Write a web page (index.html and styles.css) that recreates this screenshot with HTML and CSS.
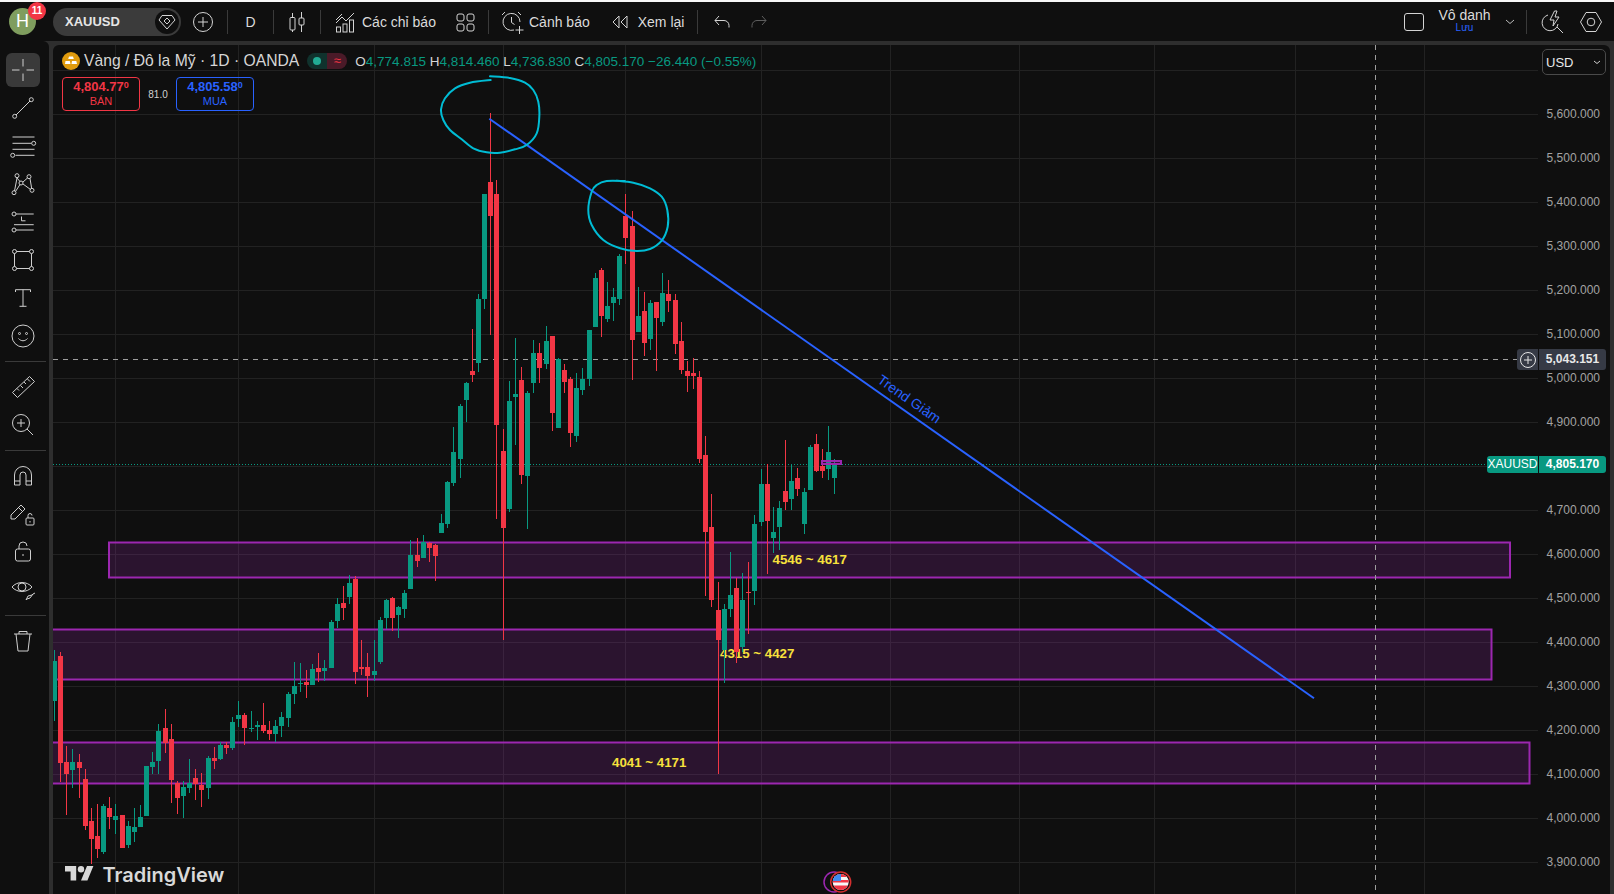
FILE: index.html
```html
<!DOCTYPE html>
<html lang="vi">
<head>
<meta charset="utf-8">
<title>XAUUSD</title>
<link rel="stylesheet" href="styles.css">
</head>
<body>
<header class="topbar">
  <div class="avatar">H<span class="badge">11</span></div>
  <div class="symbol">
    <span class="symbol-name">XAUUSD</span>
    <span class="gem"><svg width="20" height="20" viewBox="0 0 20 20"><path d="M5 3.5h10l3 4.5-8 9-8-9z"/><path d="M10 6l3 3-3 3-3-3z"/></svg></span>
  </div>
  <button class="tb plus-btn"><svg width="22" height="22" viewBox="0 0 22 22"><circle cx="11" cy="11" r="9.5"/><path d="M11 6v10M6 11h10"/></svg></button>
  <i class="sep sep-a"></i>
  <button class="tb d-btn">D</button>
  <i class="sep"></i>
  <button class="tb candle-btn"><svg width="24" height="24" viewBox="0 0 24 24"><path d="M7.5 3v5M7.5 20v2M16.5 2v6M16.5 15v7"/><rect x="5" y="7.5" width="5" height="12.500" rx="1"/><rect x="14" y="8" width="5" height="7" rx="1"/></svg></button>
  <i class="sep"></i>
  <button class="tb ind-btn"><svg width="24" height="24" viewBox="0 0 24 24"><path d="M3 13l6-6 4 4 8-8M3 10l6-6"/><rect x="3.500" y="17" width="4" height="5"/><rect x="10" y="14" width="4" height="8"/><rect x="16.500" y="10" width="4" height="12"/></svg><span>Các chỉ báo</span></button>
  <button class="tb grid-btn"><svg width="24" height="24" viewBox="0 0 24 24"><rect x="4" y="4" width="7" height="7" rx="2"/><rect x="14" y="4" width="7" height="7" rx="2"/><rect x="4" y="14" width="7" height="7" rx="2"/><rect x="14" y="14" width="7" height="7" rx="2"/></svg></button>
  <i class="sep sep-c"></i>
  <button class="tb alert-btn"><svg width="26" height="26" viewBox="0 0 26 26"><path d="M15 21a8.500 8.500 0 1 1 6-8M12.500 8v5.500l3 2M3 6l3-3M22 6l-3-3"/><path d="M20.500 17v8M16.500 21h8"/></svg><span>Cảnh báo</span></button>
  <button class="tb replay-btn"><svg width="24" height="24" viewBox="0 0 24 24"><path d="M11 6l-6 6 6 6zM19 6l-6 6 6 6z"/></svg><span>Xem lại</span></button>
  <i class="sep sep-d"></i>
  <button class="tb undo-btn"><svg width="22" height="22" viewBox="0 0 22 22"><path d="M8 5L4 9.500l4 4.500M4 9.500h9a5 5 0 0 1 5 5v2"/></svg></button>
  <button class="tb redo-btn"><svg width="22" height="22" viewBox="0 0 22 22"><path d="M14 5l4 4.500-4 4.500M18 9.500H9a5 5 0 0 0-5 5v2"/></svg></button>
  <div class="top-right">
    <i class="layout-box"></i>
    <div class="layout-name"><span class="layout-title">Vô danh</span><span class="layout-save">Lưu</span></div>
    <svg class="chev" width="10" height="6" viewBox="0 0 10 6"><path d="M1 1l4 3.500L9 1"/></svg>
    <i class="sep sep-b"></i>
    <button class="tb tool-btn"><svg width="28" height="28" viewBox="0 0 28 28"><path d="M10 7a8 8 0 1 0 10 9M19 19l6 6"/><path d="M16.500 3L12 12h4l-1 6 6-9h-4l2-6z"/></svg></button>
    <button class="tb tool-btn hex-btn"><svg width="24" height="24" viewBox="0 0 24 24"><path d="M7 2.500h10l5.500 9.500-5.500 9.500H7L1.500 12z"/><circle cx="12" cy="12" r="3.800"/></svg></button>
  </div>
</header>

<div class="main">
  <nav class="side">
    <div class="tool-group">
      <button class="tool active"><svg width="28" height="28" viewBox="0 0 28 28"><path d="M14 3v7.500M14 17.500V25M3 14h7.500M17.500 14H25"/></svg></button>
      <button class="tool"><svg width="28" height="28" viewBox="0 0 28 28"><circle cx="22.300" cy="5.700" r="2"/><circle cx="5.700" cy="22.300" r="2"/><path d="M7 21L21 7"/></svg></button>
      <button class="tool"><svg width="28" height="28" viewBox="0 0 28 28"><path d="M3.500 5h22M3.500 11.300h19M3.500 17.300h22M6.500 23.300h19"/><circle cx="24.700" cy="11.300" r="2"/><circle cx="3.700" cy="23.300" r="2"/></svg></button>
      <button class="tool"><svg width="28" height="28" viewBox="0 0 28 28"><circle cx="8" cy="5.700" r="2"/><circle cx="20" cy="6.700" r="2"/><circle cx="12" cy="13" r="2"/><circle cx="5" cy="22.700" r="2"/><circle cx="23" cy="20.300" r="2"/><path d="M7.500 7.500l3.500 4M18.500 8L14 12M5.500 21L8 8M21 8.500l1.700 10M6.500 21.500l4.500-7M14 14l7.500 5.500"/></svg></button>
      <button class="tool"><svg width="28" height="28" viewBox="0 0 28 28"><circle cx="5" cy="6" r="2"/><circle cx="5" cy="22" r="2"/><path d="M7 6h17.700M5 16.700h19.700M7 22h17.700M12.500 8.500v4.300h4"/></svg></button>
      <button class="tool"><svg width="28" height="28" viewBox="0 0 28 28"><circle cx="5.500" cy="5.500" r="2"/><circle cx="22.500" cy="5.500" r="2"/><circle cx="5.500" cy="22.500" r="2"/><circle cx="22.500" cy="22.500" r="2"/><path d="M7.500 5.500h13M7.500 22.500h13M5.500 7.500v13M22.500 7.500v13"/></svg></button>
      <button class="tool"><svg width="28" height="28" viewBox="0 0 28 28"><path d="M6.500 8V5.700h15V8M14 5.700v16.600M10.500 22.300h7"/></svg></button>
      <button class="tool"><svg width="28" height="28" viewBox="0 0 28 28"><circle cx="14" cy="14" r="11"/><circle cx="10.500" cy="11.500" r="1"/><circle cx="17.500" cy="11.500" r="1"/><path d="M9.500 16.500c2.500 3 6.500 3 9 0"/></svg></button>
    </div>
    <i class="side-sep"></i>
    <div class="tool-group">
      <button class="tool"><svg width="28" height="28" viewBox="0 0 28 28"><path d="M3.500 19.500L20.500 3.500l5 5L8.500 24.500zM8 15.500l2 2M11.500 12.500l2.500 2.500M15 9l2 2M18.500 6l2.500 2.500"/></svg></button>
      <button class="tool"><svg width="28" height="28" viewBox="0 0 28 28"><circle cx="12" cy="12" r="8.500"/><path d="M12 8v8M8 12h8M18 18l6 6"/></svg></button>
    </div>
    <i class="side-sep"></i>
    <div class="tool-group">
      <button class="tool"><svg width="28" height="28" viewBox="0 0 28 28"><path d="M5.500 23V13a8.500 8.500 0 0 1 17 0v10h-5.500V13a3 3 0 0 0-6 0v10zM5.500 19H11M17 19h5.500"/></svg></button>
      <button class="tool"><svg width="28" height="28" viewBox="0 0 28 28"><path d="M2 19v-4L12 5l4 4L6 19zM9.500 7.500l4 4"/><rect x="17" y="18" width="8" height="7" rx="1"/><path d="M19 18v-2.500a2 2 0 0 1 4 0M21 21v1.500"/></svg></button>
      <button class="tool"><svg width="28" height="28" viewBox="0 0 28 28"><rect x="6.500" y="11" width="15" height="12" rx="2"/><path d="M10 11V8a4 4 0 0 1 8 0M14 16v2"/></svg></button>
      <button class="tool"><svg width="28" height="28" viewBox="0 0 28 28"><path d="M3 11c5-6 15-6 20 0-5 6-15 6-20 0z"/><circle cx="13" cy="11" r="4"/><path d="M17 24l2-4 4-1 1-1-3 4-3 1zM24 18l2-1"/></svg></button>
    </div>
    <i class="side-sep"></i>
    <div class="tool-group">
      <button class="tool"><svg width="28" height="28" viewBox="0 0 28 28"><path d="M5 7h18M10 7V4.500h8V7M7 7l2 17h10l2-17"/></svg></button>
    </div>
  </nav>

  <section class="chart">
    <svg id="canvas" class="canvas" width="1557" height="849" viewBox="53 45 1557 849"></svg>

    <div class="legend">
      <svg class="gold" width="18" height="18" viewBox="0 0 18 18"><circle cx="9" cy="9" r="9"/><path d="M7 4.500h4l.8 2.500H6.200zM3.500 9h4.300l.7 3H3zM10 9h4.300l.7 3h-5.500z"/></svg>
      <span class="title">Vàng / Đô la Mỹ · 1D · OANDA</span>
      <span class="status"><span class="st-g"><i></i></span><span class="st-r">≈</span></span>
      <span class="ohlc"><b>O</b>4,774.815 <b>H</b>4,814.460 <b>L</b>4,736.830 <b>C</b>4,805.170 −26.440 (−0.55%)</span>
    </div>
    <div class="trade">
      <div class="tbox sell"><strong>4,804.77<sup>0</sup></strong><span>BÁN</span></div>
      <span class="spread">81.0</span>
      <div class="tbox buy"><strong>4,805.58<sup>0</sup></strong><span>MUA</span></div>
    </div>

    <div class="currency"><span>USD</span><svg width="8" height="5" viewBox="0 0 8 5"><path d="M1 1l3 2.500L7 1"/></svg></div>

    <div class="axis">
      <span>5,600.000</span><span>5,500.000</span><span>5,400.000</span><span>5,300.000</span><span>5,200.000</span><span>5,100.000</span><span>5,000.000</span><span>4,900.000</span><span>4,800.000</span><span>4,700.000</span><span>4,600.000</span><span>4,500.000</span><span>4,400.000</span><span>4,300.000</span><span>4,200.000</span><span>4,100.000</span><span>4,000.000</span><span>3,900.000</span>
    </div>

    <div class="tag cross-tag">
      <span class="tag-l"><svg width="18" height="18" viewBox="0 0 18 18"><circle cx="9" cy="9" r="7.500"/><path d="M9 5v8M5 9h8"/></svg></span>
      <span class="tag-r">5,043.151</span>
    </div>
    <div class="tag last-tag">
      <span class="tag-l">XAUUSD</span>
      <span class="tag-r">4,805.170</span>
    </div>
  </section>
</div>
<script src="app.js"></script>
</body>
</html>
```

FILE: styles.css
```css
* { box-sizing: border-box; }
html, body { margin: 0; height: 894px; overflow: hidden; }
body {
  background: #2e2e2e;
  color: #dbdbdb;
  font-family: "Liberation Sans", Arial, sans-serif;
  display: flex;
  flex-direction: column;
}
button { background: none; border: 0; padding: 0; color: inherit; font: inherit; }
svg { display: block; }

/* top toolbar */
.topbar {
  height: 41px;
  flex: none;
  border-top: 2px solid #f7f7f7;
  background: #0f0f0f;
  display: flex;
  align-items: center;
  padding-left: 9px;
  font-size: 14px;
}
.topbar svg:not(.chev) { fill: none; stroke: #d4d4d4; stroke-width: 1; }
.avatar {
  position: relative;
  width: 27px;
  height: 27px;
  border-radius: 50%;
  background: #7f9d5e;
  color: #fff;
  font-size: 18px;
  line-height: 27px;
  text-align: center;
  flex: none;
}
.badge {
  position: absolute;
  left: 19px;
  top: -6px;
  width: 18px;
  height: 18px;
  border-radius: 50%;
  background: #f23645;
  color: #fff;
  font-size: 10px;
  font-weight: 700;
  line-height: 18px;
  text-align: center;
}
.symbol {
  margin-left: 17px;
  width: 128px;
  height: 28px;
  border-radius: 14px;
  background: #3b3b3b;
  display: flex;
  align-items: center;
  justify-content: space-between;
  padding: 0 2px 0 12px;
  flex: none;
}
.symbol-name { font-size: 13px; font-weight: 700; color: #e6e6e6; }
.gem {
  width: 24px;
  height: 24px;
  border-radius: 50%;
  background: #0f0f0f;
  display: flex;
  align-items: center;
  justify-content: center;
}
.tb { display: flex; align-items: center; justify-content: center; flex: none; }
.plus-btn { margin-left: 11px; width: 22px; }
.sep { width: 1px; height: 24px; background: #3a3a3a; flex: none; }
.sep-a { margin-left: 13px; }
.d-btn { width: 45px; font-size: 14px; }
.candle-btn { width: 46px; }
.ind-btn { margin-left: 12px; width: 116px; justify-content: flex-start; gap: 5px; white-space: nowrap; }
.grid-btn { margin-left: 4px; }
.sep-c { margin-left: 11px; }
.alert-btn { margin-left: 10px; white-space: nowrap; gap: 4px; }
.replay-btn { margin-left: 18px; white-space: nowrap; gap: 6px; }
.sep-d { margin-left: 13px; }
.undo-btn { margin-left: 13px; }
.redo-btn { margin-left: 15px; opacity: .4; }
.top-right { margin-left: auto; display: flex; align-items: center; height: 100%; }
.layout-box { width: 20px; height: 18px; border: 1px solid #d4d4d4; border-radius: 3px; }
.layout-name { margin-left: 14px; width: 53px; display: flex; flex-direction: column; align-items: center; line-height: 1; }
.layout-title { font-size: 14px; margin-top: -2px; }
.layout-save { font-size: 10px; color: #2962ff; margin-top: 1px; }
.chev { margin-left: 14px; fill: none; stroke: #bdbdbd; stroke-width: 1; }
.sep-b { margin-left: 11px; }
.tool-btn { margin-left: 11px; width: 28px; }
.hex-btn { margin-left: 11px; margin-right: 9px; }

/* main */
.main { flex: 1; display: flex; gap: 4px; padding: 4px 4px 0 0; min-height: 0; }
.side {
  width: 49px;
  flex: none;
  background: #0f0f0f;
  border-radius: 0 6px 0 0;
  margin-top: -4px;
  padding-top: 10px;
}
.side svg { fill: none; stroke: #cfcfcf; stroke-width: 1; }
.tool-group { display: flex; flex-direction: column; }
.tool {
  display: flex;
  align-items: center;
  justify-content: center;
  width: 34px;
  height: 34px;
  margin: 2px auto 2px 6px;
  border-radius: 6px;
}
.tool.active { background: #3a3a3a; }
.side-sep { display: block; height: 1px; margin: 6px 3px 6px 5px; background: #3a3a3a; }

/* chart */
.chart {
  position: relative;
  flex: 1;
  background: #0f0f0f;
  border-radius: 6px 6px 0 0;
  overflow: hidden;
}
.canvas { position: absolute; left: 0; top: 0; }
.zone-text { font-size: 13.3px; font-weight: 700; fill: #f7e03c; }
.trend-text { font-size: 14px; fill: #2962ff; }
.logo-text { font-family: Inter, sans-serif; font-size: 20px; font-weight: 600; fill: #d9d9d9; }

.legend {
  position: absolute;
  left: 9px;
  top: 7px;
  height: 18px;
  display: flex;
  align-items: center;
  white-space: nowrap;
}
.gold { flex: none; }
.gold circle { fill: #e09b0d; }
.gold path { fill: #fff; }
.title { margin-left: 4px; font-size: 15.7px; color: #d6d6d6; }
.status { margin-left: 8px; width: 40px; height: 16px; border-radius: 8px; overflow: hidden; display: flex; flex: none; }
.st-g { flex: 1; background: #10322d; display: flex; align-items: center; justify-content: center; }
.st-g i { width: 8px; height: 8px; border-radius: 50%; background: #22ab94; }
.st-r { flex: 1; background: #4a1a28; color: #f23645; font-size: 13px; line-height: 15px; text-align: center; }
.ohlc { margin-left: 8px; font-size: 13.5px; color: #089981; }
.ohlc b { font-weight: 400; color: #d6d6d6; }

.trade { position: absolute; left: 9px; top: 32px; display: flex; align-items: center; }
.tbox {
  width: 78px;
  height: 34px;
  border: 1px solid;
  border-radius: 4px;
  display: flex;
  flex-direction: column;
  align-items: center;
  justify-content: center;
  font-size: 11px;
  line-height: 14px;
}
.tbox strong { font-size: 13px; font-weight: 700; }
.tbox sup { font-size: 9px; line-height: 0; vertical-align: 3px; }
.sell { border-color: #f23645; color: #f23645; }
.buy { border-color: #2962ff; color: #2962ff; }
.spread { width: 36px; text-align: center; font-size: 10px; color: #d1d1d1; }

.currency {
  position: absolute;
  left: 1489px;
  top: 4px;
  width: 64px;
  height: 26px;
  border: 1px solid #4a4a4a;
  border-radius: 5px;
  display: flex;
  align-items: center;
  justify-content: space-between;
  padding: 0 4px 0 3px;
  font-size: 13px;
  color: #e8e8e8;
  background: #0f0f0f;
}
.currency svg { fill: none; stroke: #cfcfcf; stroke-width: 1; }

.axis {
  position: absolute;
  left: 1485px;
  width: 62px;
  top: 47px;
  display: flex;
  flex-direction: column;
  align-items: flex-end;
  font-size: 12px;
  color: #a3a3a3;
}
.axis span { height: 44px; line-height: 44px; }

.tag { position: absolute; display: flex; gap: 1px; font-size: 12px; color: #fff; }
.cross-tag { left: 1464px; top: 304px; height: 21px; line-height: 21px; }
.cross-tag .tag-l, .cross-tag .tag-r { background: #363a45; }
.cross-tag .tag-l { width: 21px; border-radius: 3px 0 0 3px; display: flex; align-items: center; justify-content: center; }
.cross-tag svg { fill: none; stroke: #e6e6e6; stroke-width: 1; }
.cross-tag .tag-r { width: 67px; font-weight: 700; text-align: center; border-radius: 0 3px 3px 0; color: #e8e8e8; }
.last-tag { left: 1434px; top: 411px; height: 17px; line-height: 17px; }
.last-tag .tag-l, .last-tag .tag-r { background: #089981; text-align: center; }
.last-tag .tag-l { width: 51px; border-radius: 3px 0 0 3px; }
.last-tag .tag-r { width: 67px; border-radius: 0 3px 3px 0; font-weight: 700; }
```

FILE: app.js
```js
var G = '#089981', R = '#f23645';
// x, high, bodyTop, bodyBottom, low, colour
var data = [
[54,650,661,701,721,G],[60,652,656,763,782,R],[66,746,762,774,815,R],[72,749,762,770,788,G],[79,754,762,768,798,R],
[85,769,779,826,830,R],[91,808,821,839,864,R],[97,804,836,849,858,R],[103,804,806,852,854,G],[109,797,808,817,829,R],
[115,804,816,820,834,G],[122,815,815,848,848,R],[128,821,826,845,848,G],[134,808,827,832,842,G],[140,805,817,827,827,G],
[146,766,766,816,816,G],[152,752,762,767,774,G],[158,724,731,761,774,G],[165,709,728,743,753,R],[171,724,739,780,803,R],
[177,781,783,798,814,R],[183,781,787,796,818,G],[189,759,783,788,793,G],[195,769,778,784,800,R],[201,773,785,790,807,R],
[208,756,758,788,799,G],[214,747,758,761,769,R],[220,742,745,759,760,G],[226,742,745,748,754,R],[232,717,722,748,750,G],
[238,701,715,719,727,G],[244,713,715,728,745,R],[251,711,728,729,732,G],[257,721,725,727,740,G],[263,703,725,731,733,R],
[269,721,730,734,740,R],[275,720,726,734,742,G],[281,712,717,726,737,G],[288,692,694,718,727,G],[294,662,686,694,704,G],
[300,663,683,684,692,G],[306,670,682,685,698,R],[312,664,669,685,685,G],[318,653,668,672,682,R],[324,660,668,671,681,G],
[331,620,622,668,668,G],[337,598,604,621,628,G],[343,586,603,608,620,R],[349,575,583,597,604,G],[355,576,579,672,684,R],
[361,640,667,669,675,R],[367,653,667,676,697,R],[374,640,671,675,681,G],[380,617,620,662,664,G],[386,599,600,618,629,G],
[392,597,598,618,631,R],[398,606,607,615,638,G],[404,590,593,609,618,G],[410,540,555,589,589,G],[417,538,555,561,567,R],
[423,535,542,558,558,G],[429,542,543,548,562,R],[435,544,545,556,581,R],[441,514,523,533,533,G],[447,481,482,524,528,G],
[453,427,452,483,486,G],[460,404,406,459,478,G],[466,382,383,400,422,G],[472,329,371,375,382,R],[478,294,299,363,372,G],
[484,194,194,299,309,G],[490,113,182,216,335,R],[496,180,194,425,519,R],[503,429,451,528,640,R],[509,381,401,509,512,G],
[515,338,394,397,445,G],[521,367,380,475,484,R],[527,391,393,476,529,G],[533,340,353,383,393,G],[539,343,353,368,383,R],
[546,326,341,364,369,G],[552,336,336,413,431,R],[558,358,359,428,428,G],[564,364,370,382,393,R],[570,377,379,433,447,R],
[576,373,388,436,442,G],[582,368,379,390,395,G],[589,330,330,379,386,G],[595,273,278,327,327,G],[601,268,270,316,337,R],
[607,282,306,319,322,G],[613,288,297,303,321,G],[619,254,256,299,305,G],[625,194,216,238,264,R],[632,211,226,340,380,R],
[638,287,316,332,332,G],[644,292,311,343,356,R],[650,300,303,339,350,G],[656,302,302,318,371,R],[662,273,293,322,326,G],
[668,280,294,301,312,R],[675,294,300,344,354,R],[681,322,341,370,374,R],[687,361,371,376,392,R],[693,358,373,376,389,R],
[699,371,377,459,463,R],[705,436,455,532,596,R],[711,494,527,600,607,R],[718,582,610,640,774,R],[724,604,609,650,683,G],
[730,552,595,609,617,G],[736,578,588,652,663,R],[742,573,600,647,652,G],[748,562,592,593,634,R],[754,515,524,591,605,G],
[761,469,484,522,526,G],[767,464,484,521,574,R],[773,507,532,538,553,G],[779,501,508,527,550,G],[785,440,491,502,510,R],
[791,464,481,499,510,G],[797,468,478,489,496,R],[804,488,492,524,534,G],[810,445,447,490,490,G],[816,434,444,471,472,R],
[822,449,466,471,478,R],[828,426,452,469,480,G],[834,459,464,478,494,G]
];
var vGrid = [115,238,374,503,625,761,890,1019,1154,1295,1424];

// Catmull-Rom through points measured on the reference (3x crop of origin 420,70)
function stroke(pts) {
  var p = pts.map(function (q) { return [420 + q[0] / 3, 70 + q[1] / 3]; });
  var d = 'M' + p[0][0].toFixed(1) + ' ' + p[0][1].toFixed(1);
  for (var k = 0; k < p.length - 1; k++) {
    var a = p[Math.max(0, k - 1)], b = p[k], c = p[k + 1], e = p[Math.min(p.length - 1, k + 2)];
    d += 'C' + (b[0] + (c[0] - a[0]) / 6).toFixed(1) + ' ' + (b[1] + (c[1] - a[1]) / 6).toFixed(1) + ' ' +
      (c[0] - (e[0] - b[0]) / 6).toFixed(1) + ' ' + (c[1] - (e[1] - b[1]) / 6).toFixed(1) + ' ' +
      c[0].toFixed(1) + ' ' + c[1].toFixed(1);
  }
  return d;
}
var circleA = [[212,30],[150,38],[105,55],[75,85],[63,118],[70,150],[90,180],[125,208],[160,235],[200,247],[240,248],[285,238],[320,225],[350,190],[358,140],[355,95],[340,60],[315,38],[270,24],[210,19]];
var circleB = [[615,333],[560,333],[530,345],[515,365],[505,420],[515,465],[550,510],[600,535],[650,543],[690,537],[725,512],[743,470],[742,420],[725,380],[690,355],[640,338],[590,332]];

var s = '<defs><clipPath id="flagClip"><circle cx="840.7" cy="882" r="8"/></clipPath></defs>';
var y;

// grid
s += '<g stroke="#222222" stroke-width="1">';
for (y = 70; y <= 862; y += 44) s += '<path d="M53 ' + (y + .5) + 'H1538"/>';
vGrid.forEach(function (x) { s += '<path d="M' + (x + .5) + ' 45V894"/>'; });
s += '</g>';

// zones
s += '<g fill="#9c27b0" fill-opacity=".2" stroke="#9c27b0" stroke-width="2">' +
  '<rect x="109" y="542.500" width="1401" height="35"/>' +
  '<rect x="50" y="629.500" width="1441.500" height="50"/>' +
  '<rect x="50" y="742.500" width="1479.500" height="41"/></g>';

// labels below the candles
s += '<text class="zone-text" x="772.500" y="564">4546 ~ 4617</text>';
s += '<text class="zone-text" x="720" y="658">4315 ~ 4427</text>';
s += '<text class="zone-text" x="612" y="767">4041 ~ 4171</text>';

// crosshair and last price
s += '<path d="M53 464.500H1487" stroke="#089981" stroke-dasharray="1 2" fill="none"/>';
s += '<path d="M1375.500 45V894M53 359.500H1517" stroke="#9e9e9e" stroke-dasharray="5 5" fill="none"/>';

// candles
data.forEach(function (c) {
  s += '<rect x="' + c[0] + '" y="' + c[1] + '" width="1" height="' + (c[4] - c[1]) + '" fill="' + c[5] + '"/>';
  s += '<rect x="' + (c[0] - 2) + '" y="' + c[2] + '" width="5" height="' + Math.max(1, c[3] - c[2]) + '" fill="' + c[5] + '"/>';
});

// small rectangle at last bar
s += '<rect x="822" y="461" width="19" height="3" fill="#9c27b0" fill-opacity=".2" stroke="#9c27b0" stroke-width="2"/>';

// trend line
s += '<path d="M489.300 118.700L1314 698.300" stroke="#2962ff" stroke-width="2" fill="none"/>';
s += '<text class="trend-text" text-anchor="middle" transform="translate(906.500 403) rotate(35)">Trend Giảm</text>';

// hand-drawn circles
s += '<g fill="none" stroke="#00bcd4" stroke-width="2" stroke-linecap="round" stroke-linejoin="round">' +
  '<path d="' + stroke(circleA) + '"/><path d="' + stroke(circleB) + '"/></g>';

// logo
s += '<g fill="#d9d9d9" transform="translate(65 862.800) scale(.8)"><path d="M14 22H7V11H0V4h14v18zM28 22h-8l7.500-18h8L28 22z"/><circle cx="20" cy="8" r="4"/></g>';
s += '<text class="logo-text" x="102.500" y="881.500">TradingView</text>';

// flag
s += '<circle cx="834" cy="882" r="10" fill="#0f0f0f" stroke="#9c27b0" stroke-width="1.500"/>';
s += '<circle cx="840.700" cy="882" r="10" fill="#0f0f0f" stroke="#d32f2f" stroke-width="1.500"/>';
s += '<g clip-path="url(#flagClip)"><rect x="832" y="874" width="18" height="16" fill="#f7f7f7"/>' +
  '<rect x="832" y="874" width="18" height="3" fill="#f23645"/><rect x="832" y="880" width="18" height="2.500" fill="#f23645"/><rect x="832" y="885.500" width="18" height="5" fill="#f23645"/>' +
  '<rect x="832" y="874" width="9" height="7" fill="#3d8bf2"/></g>';

document.getElementById('canvas').innerHTML = s;
```
